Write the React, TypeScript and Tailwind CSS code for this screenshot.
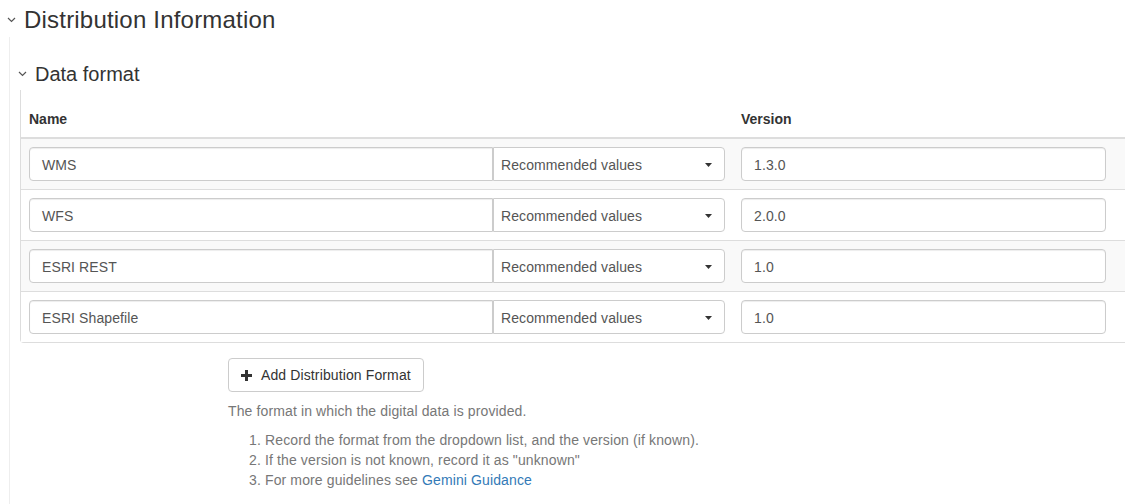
import type { ReactNode } from 'react';

type Format = {
  name: string;
  version: string;
};

const formats: Format[] = [
  { name: 'WMS', version: '1.3.0' },
  { name: 'WFS', version: '2.0.0' },
  { name: 'ESRI REST', version: '1.0' },
  { name: 'ESRI Shapefile', version: '1.0' },
];

function Chevron({ className }: { className?: string }) {
  return (
    <svg width="9" height="6" viewBox="0 0 9 6" className={className} aria-hidden="true">
      <polyline points="1,1 4.5,4.5 8,1" fill="none" stroke="#555" strokeWidth="1.2" />
    </svg>
  );
}

function Caret() {
  return (
    <svg width="7" height="4" viewBox="0 0 7 4" aria-hidden="true">
      <polygon points="0,0 7,0 3.5,4" fill="#333" />
    </svg>
  );
}

function PlusIcon() {
  return (
    <svg width="11" height="11" viewBox="0 0 11 11" aria-hidden="true">
      <rect x="4" y="0" width="3" height="11" fill="#333" />
      <rect x="0" y="4" width="11" height="3" fill="#333" />
    </svg>
  );
}

function Field({ value, className }: { value: string; className?: string }) {
  return (
    <div
      className={`flex h-[34px] items-center border border-[#ccc] bg-white px-[12px] pt-[2px] text-[14px] text-[#555] tracking-[0.1px] shadow-[inset_0_1px_1px_rgba(0,0,0,0.075)] ${className ?? ''}`}
    >
      {value}
    </div>
  );
}

function Row({ format, striped }: { format: Format; striped: boolean }) {
  return (
    <div className={`flex border-[#ddd] border-t ${striped ? 'bg-[#f9f9f9]' : 'bg-white'}`}>
      <div className="flex w-[712px] flex-none p-2">
        <Field value={format.name} className="w-[464px] flex-none rounded-l-[4px]" />
        <div className="flex h-[34px] flex-1 items-center justify-between rounded-r-[4px] border border-[#ccc] bg-white pt-[2px] pr-[12px] pl-[7px] text-[14px] text-[#555] tracking-[0.1px]">
          <span>Recommended values</span>
          <Caret />
        </div>
      </div>
      <div className="w-[381px] flex-none p-2">
        <Field value={format.version} className="rounded-[4px]" />
      </div>
      <div className="flex-1" />
    </div>
  );
}

function Section({ title, children }: { title: string; children: ReactNode }) {
  return (
    <div>
      <div className="flex items-center gap-[8px] pl-[8px]">
        <Chevron />
        <h3 className="text-[20px] text-[#333] leading-[22px]">{title}</h3>
      </div>
      {children}
    </div>
  );
}

export default function App() {
  return (
    <div className="h-[504px] w-[1125px] overflow-hidden bg-white font-['Liberation_Sans',Arial,sans-serif] text-[#333]">
      <div className="flex items-center gap-[8px] pt-[7px] pl-[7px]">
        <Chevron />
        <h2 className="text-[24px] leading-[26px] tracking-[0.2px]">Distribution Information</h2>
      </div>

      <div className="mt-[4px] ml-[9px] h-[480px] border-[#eee] border-l pt-[26px]">
        <Section title="Data format">
          <div className="mt-[5px] ml-[10px] rounded-bl-[4px] border-[#ddd] border-b border-l pt-[11px]">
            <div className="flex border-[#ddd] border-b-2 font-bold text-[14px] leading-5">
              <div className="w-[712px] flex-none px-2 py-2">Name</div>
              <div className="w-[381px] flex-none px-2 py-2">Version</div>
            </div>
            <div className="-mt-px">
              {formats.map((f, i) => (
                <Row key={f.name} format={f} striped={i % 2 === 0} />
              ))}
            </div>
          </div>

          <div className="ml-[218px]">
            <button
              type="button"
              className="mt-[15px] flex h-[34px] items-center gap-[9px] rounded-[4px] border border-[#ccc] bg-white px-[12px] text-[14px] text-[#333] tracking-[0.12px]"
            >
              <PlusIcon />
              Add Distribution Format
            </button>
            <p className="mt-[9px] text-[14px] text-[#777] leading-5 tracking-[0.12px]">
              The format in which the digital data is provided.
            </p>
            <ol className="mt-[9px] list-decimal pl-[37px] text-[14px] text-[#777] leading-5 tracking-[0.12px]">
              <li>Record the format from the dropdown list, and the version (if known).</li>
              <li>If the version is not known, record it as "unknown"</li>
              <li>
                For more guidelines see <a className="text-[#337ab7]">Gemini Guidance</a>
              </li>
            </ol>
          </div>
        </Section>
      </div>
    </div>
  );
}
